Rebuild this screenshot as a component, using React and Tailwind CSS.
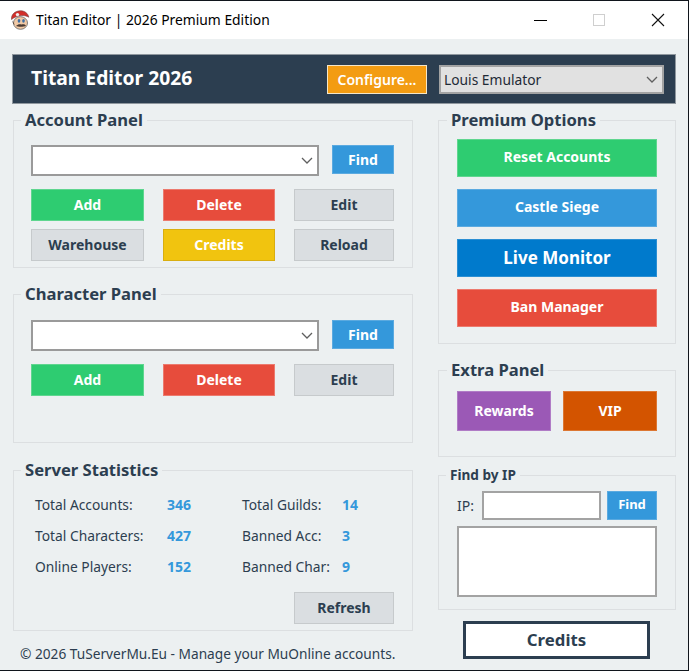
import React from "react";

const font = { fontFamily: '"Noto Sans", "Open Sans", sans-serif' };

const MarioIcon = () => (
  <svg viewBox="0 0 20 20" className="w-5 h-5 shrink-0">
    <ellipse cx="10.5" cy="13" rx="7" ry="6.3" fill="#f1c9a5" stroke="#666" strokeWidth="0.8" />
    <path d="M1.5 9.5C1 4.5 5 1 10 .8c4.5-.2 8 2.4 8.8 6.4-2.4-1.4-5-1.9-7.600-1.600C8 6 4 7.400 1.500 9.500z" fill="#d32f2a" stroke="#6e3a3a" strokeWidth="0.6" />
    <circle cx="7.500" cy="4.600" r="1.700" fill="#eee" />
    <ellipse cx="9" cy="10.800" rx="1.300" ry="1.900" fill="#3c6ea5" />
    <ellipse cx="13.500" cy="10.800" rx="1.300" ry="1.900" fill="#3c6ea5" />
    <path d="M6 16c2-2 3.500-2 5.500-1.500 2-.5 3-.5 4.500 1.300-2 1.200-8 1.300-10 .2z" fill="#4a3a32" />
    <path d="M2.800 10.500c.4 1.800 1 3 2 4l-1.100-.2C2.800 13.500 2.300 11.500 2.800 10.500z" fill="#4a3a32" />
  </svg>
);

const Chevron = () => (
  <svg viewBox="0 0 12 7" className="w-[12px] h-[7px] shrink-0">
    <path d="M1 1l5 5 5-5" fill="none" stroke="#5f5f5f" strokeWidth="1.300" />
  </svg>
);

const Btn = ({ className, children }) => (
  <button className={`flex items-center justify-center border font-bold text-[14px] pb-[1px] ${className}`}>
    {children}
  </button>
);

const green = "bg-[#2ecc71] border-[#5fd68f] text-white";
const red = "bg-[#e74c3c] border-[#ec7a6e] text-white";
const gray = "bg-[#dadee1] border-[#c6cacc] text-[#2c3e50]";
const yellow = "bg-[#f1c40f] border-[#d9ae10] text-white";
const blue = "bg-[#3498db] border-[#5baae0] text-white";

const Panel = ({ title, className, legendClass = "text-[16.6px]", children }) => (
  <fieldset className={`border border-[#dcdfe1] ${className}`}>
    <legend className={`ml-[7px] px-[4px] font-bold leading-[20px] text-[#2c3e50] ${legendClass}`}>{title}</legend>
    {children}
  </fieldset>
);

const Combo = () => (
  <div className="flex items-center justify-end w-[288px] h-[31px] bg-white border-2 border-[#9a9a9a] pr-[4px]">
    <Chevron />
  </div>
);

const Stat = ({ label, value, labelClass }) => (
  <div className="flex items-center h-[31px]">
    <span className={`pt-[2px] text-[13.800px] text-[#2c3e50] ${labelClass}`}>{label}</span>
    <span className="text-[14px] font-bold text-[#3498db]">{value}</span>
  </div>
);

export default function App() {
  return (
    <div style={font} className="w-[689px] h-[671px] overflow-hidden flex flex-col bg-[#ecf0f1] border-t border-r border-b border-[#10151c]">
      {/* title bar */}
      <div className="flex items-center h-[38px] bg-white shrink-0 pl-[10px]">
        <MarioIcon />
        <span className="ml-[6px] text-[13.850px] text-black">Titan Editor | 2026 Premium Edition</span>
        <div className="ml-auto flex items-center">
          <div className="w-[13px] h-px bg-black mr-[46px]" />
          <div className="w-[12px] h-[12px] border border-[#cfcfcf] mr-[46px]" />
          <svg viewBox="0 0 14 14" className="w-[14px] h-[14px] mr-[23px]">
            <path d="M1 1l12 12M13 1L1 13" stroke="#111" strokeWidth="1.100" />
          </svg>
        </div>
      </div>

      {/* header */}
      <div className="flex items-center h-[50px] mt-[15px] ml-[12px] w-[664px] bg-[#2c3e50] border border-[#8f979e] shrink-0">
        <span className="ml-[18px] pb-[1px] text-[19.300px] font-bold text-white">Titan Editor 2026</span>
        <button className="ml-auto w-[100px] h-[29px] bg-[#f39c12] border border-[#f5e6c8] text-white text-[14px] font-semibold">
          Configure...
        </button>
        <div className="flex items-center justify-between ml-[12px] mr-[11px] w-[225px] h-[29px] bg-[#e1e1e1] border-2 border-[#a3a3a3] pl-[3px] pr-[4px]">
          <span className="pt-[2px] text-[13.800px] text-[#1f2a36]">Louis Emulator</span>
          <Chevron />
        </div>
      </div>

      <div className="flex mt-[6px] ml-[13px]">
        {/* left column */}
        <div className="flex flex-col w-[400px]">
          <Panel title="Account Panel" className="h-[158px]">
            <div className="pl-[17px] pt-[15px]">
              <div className="flex items-start">
                <Combo />
                <Btn className={`ml-[13px] w-[62px] h-[29px] ${blue}`}>Find</Btn>
              </div>
              <div className="flex mt-[13px]">
                <Btn className={`w-[113px] h-[32px] ${green}`}>Add</Btn>
                <Btn className={`ml-[19px] w-[112px] h-[32px] ${red}`}>Delete</Btn>
                <Btn className={`ml-[19px] w-[100px] h-[32px] ${gray}`}>Edit</Btn>
              </div>
              <div className="flex mt-[8px]">
                <Btn className={`w-[113px] h-[32px] ${gray}`}>Warehouse</Btn>
                <Btn className={`ml-[19px] w-[112px] h-[32px] ${yellow}`}>Credits</Btn>
                <Btn className={`ml-[19px] w-[100px] h-[32px] ${gray}`}>Reload</Btn>
              </div>
            </div>
          </Panel>

          <Panel title="Character Panel" className="mt-[16px] h-[159px]">
            <div className="pl-[17px] pt-[16px]">
              <div className="flex items-start">
                <Combo />
                <Btn className={`ml-[13px] w-[62px] h-[29px] ${blue}`}>Find</Btn>
              </div>
              <div className="flex mt-[13px]">
                <Btn className={`w-[113px] h-[32px] ${green}`}>Add</Btn>
                <Btn className={`ml-[19px] w-[112px] h-[32px] ${red}`}>Delete</Btn>
                <Btn className={`ml-[19px] w-[100px] h-[32px] ${gray}`}>Edit</Btn>
              </div>
            </div>
          </Panel>

          <Panel title="Server Statistics" className="mt-[17px] h-[171px]">
            <div className="pl-[21px] pt-[9px]">
              <div className="flex">
                <div className="w-[207px]">
                  <Stat label="Total Accounts:" value="346" labelClass="w-[132px]" />
                  <Stat label="Total Characters:" value="427" labelClass="w-[132px]" />
                  <Stat label="Online Players:" value="152" labelClass="w-[132px]" />
                </div>
                <div>
                  <Stat label="Total Guilds:" value="14" labelClass="w-[100px]" />
                  <Stat label="Banned Acc:" value="3" labelClass="w-[100px]" />
                  <Stat label="Banned Char:" value="9" labelClass="w-[100px]" />
                </div>
              </div>
              <Btn className={`ml-[259px] mt-[10px] w-[100px] h-[32px] ${gray}`}>Refresh</Btn>
            </div>
          </Panel>

          <p className="ml-[7px] mt-[13px] text-[13.700px] leading-[20px] text-[#2c3e50]">
            © 2026 TuServerMu.Eu - Manage your MuOnline accounts.
          </p>
        </div>

        {/* right column */}
        <div className="flex flex-col ml-[25px] w-[238px]">
          <Panel title="Premium Options" legendClass="!ml-[8px] text-[16.6px]" className="h-[234px]">
            <div className="flex flex-col gap-[12px] pl-[18px] pt-[9px]">
              <Btn className={`w-[200px] h-[38px] !pb-[3px] ${green}`}>Reset Accounts</Btn>
              <Btn className={`w-[200px] h-[38px] !pb-[3px] ${blue}`}>Castle Siege</Btn>
              <Btn className="w-[200px] h-[38px] bg-[#007acc] border-[#2b8fd3] text-white !text-[17px]">Live Monitor</Btn>
              <Btn className={`w-[200px] h-[38px] !pb-[3px] ${red}`}>Ban Manager</Btn>
            </div>
          </Panel>

          <Panel title="Extra Panel" legendClass="!ml-[8px] text-[16.6px]" className="mt-[16px] h-[97px]">
            <div className="flex gap-[12px] pl-[18px] pt-[11px]">
              <Btn className="w-[94px] h-[40px] bg-[#9b59b6] border-[#b07cc6] text-white">Rewards</Btn>
              <Btn className="w-[94px] h-[40px] bg-[#d35400] border-[#dc7733] text-white">VIP</Btn>
            </div>
          </Panel>

          <Panel title="Find by IP" legendClass="text-[13.600px]" className="mt-[8px] h-[145px]">
            <div className="pl-[18px] pt-[6px]">
              <div className="flex items-center">
                <span className="w-[25px] text-[14px] text-[#2c3e50]">IP:</span>
                <input className="w-[119px] h-[29px] bg-white border-2 border-[#a3a3a3]" />
                <Btn className={`ml-[6px] w-[50px] h-[29px] !text-[13px] ${blue}`}>Find</Btn>
              </div>
              <textarea className="block mt-[6px] w-[200px] h-[71px] bg-white border-2 border-[#a3a3a3] resize-none" />
            </div>
          </Panel>

          <button className="mt-[11px] ml-[25px] w-[187px] h-[38px] bg-white border-[3px] border-[#2c3e50] text-[#2c3e50] text-[16.800px] font-bold">
            Credits
          </button>
        </div>
      </div>
    </div>
  );
}
